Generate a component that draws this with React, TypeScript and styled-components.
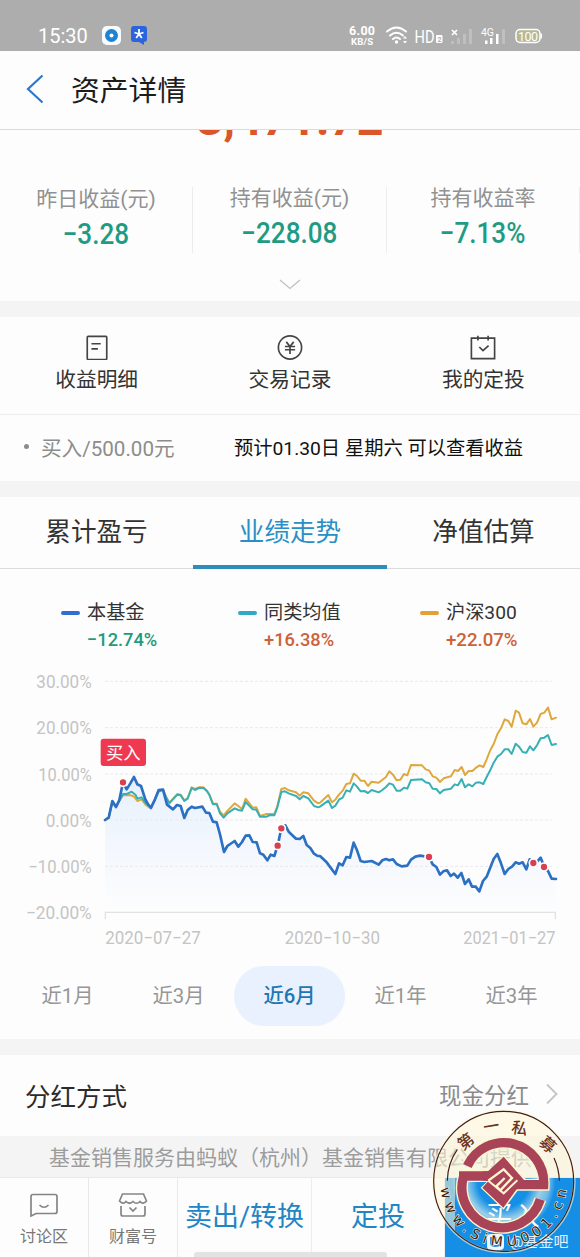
import React from 'react';
// styled
import styled, { createGlobalStyle } from 'styled-components';

const sans = `Roboto, 'Noto Sans CJK SC', sans-serif`;

const GlobalStyle = createGlobalStyle`
    * { box-sizing: border-box; }
    body {
        margin: 0;
        background: #fdfdfd;
        font-family: ${sans};
        color: #333;
    }
    svg { display: block; }
`;

const Page = styled.div`
    position: relative;
    width: 580px;
    height: 1257px;
    overflow: hidden;
    display: flex;
    flex-direction: column;
    background: #fdfdfd;
`;

// Horizontally squeezed text, close to the narrow numerals of the app
const Narrow = styled.span<{ $x?: number; $origin?: string }>`
    display: inline-block;
    white-space: nowrap;
    transform: scaleX(${p => p.$x || 0.9});
    transform-origin: ${p => p.$origin || 'center'};
`;

const StatusBar = styled.div`
    flex: none;
    height: 51px;
    padding: 20px 36px 0 38px;
    display: flex;
    align-items: center;
    background: #adadad;
    color: #fff;
`;

const Clock = styled.div`
    width: 64px;
    font-size: 20px;
    line-height: 30px;
`;

const StatusRight = styled.div`
    flex: 1;
    display: flex;
    justify-content: flex-end;
`;

const NavBar = styled.div`
    flex: none;
    height: 79px;
    padding: 0 26px 3px;
    display: flex;
    align-items: center;
    gap: 27px;
    border-bottom: 1px solid #dcdcdc;
    color: #1c1c1c;
    font-size: 28.8px;
`;

const Summary = styled.div`
    flex: none;
    height: 171px;
    overflow: hidden;
    display: flex;
    flex-direction: column;
    align-items: center;
`;

const Total = styled.div`
    flex: none;
    height: 48px;
    margin-top: -35px;
    line-height: 48px;
    font-size: 47px;
    font-weight: 700;
    color: #d9572b;
`;

const Stats = styled.div`
    width: 580px;
    margin-top: 44px;
    display: grid;
    grid-template-columns: 193px 194px 193px;
    text-align: center;
`;

const Stat = styled.div<{ $drop?: number }>`
    height: 66px;
    border-right: 1px solid #ececec;
    padding-top: ${p => p.$drop || 0}px;
`;

const StatLabel = styled.div`
    height: 22px;
    line-height: 22px;
    font-size: 21px;
    color: #919191;
`;

const StatValue = styled.div`
    margin-top: 7px;
    line-height: 34px;
    font-size: 29px;
    font-weight: 500;
    color: #1f9b83;
`;

const ChevronDown = styled.svg`
    margin-top: 26px;
`;

const Band = styled.div<{ $h: number }>`
    flex: none;
    height: ${p => p.$h}px;
    background: #f4f4f4;
`;

const Shortcuts = styled.div`
    flex: none;
    height: 98px;
    padding-top: 17px;
    display: grid;
    grid-template-columns: repeat(3, 1fr);
    border-bottom: 1px solid #ededed;
`;

const Shortcut = styled.div`
    display: flex;
    flex-direction: column;
    align-items: center;
    gap: 8px;
    font-size: 20.7px;
    line-height: 24px;
`;

const Pending = styled.div`
    flex: none;
    height: 66px;
    padding: 0 24px 3px;
    display: flex;
    align-items: center;
    font-size: 20.6px;
    color: #8c8c8c;
`;

const Bullet = styled.span`
    width: 5px;
    height: 5px;
    margin-right: 12px;
    border-radius: 50%;
    background: #8c8c8c;
`;

const PendingAmount = styled.span`
    width: 193px;
`;

const PendingNote = styled.span`
    font-size: 19.25px;
    color: #111;
`;

const Tabs = styled.div`
    flex: none;
    height: 72px;
    display: grid;
    grid-template-columns: 193px 194px 193px;
    border-bottom: 1px solid #dcdcdc;
`;

const Tab = styled.div<{ $active?: boolean }>`
    height: 72px;
    padding-top: 3px;
    line-height: 64px;
    text-align: center;
    font-size: 25.6px;
    color: ${p => p.$active ? '#2a8fc4' : '#333'};
    border-bottom: ${p => p.$active ? '4px solid #2f8dba' : 'none'};
`;

const Legend = styled.div`
    flex: none;
    height: 101px;
    padding: 31px 0 0 61px;
    display: grid;
    grid-template-columns: 177px 182px 160px;
`;

const LegendItem = styled.div`
    display: grid;
    grid-template-columns: 19px 1fr;
    grid-template-rows: 26px 26px;
    column-gap: 7px;
    align-items: center;
`;

const Dash = styled.span<{ $color: string }>`
    height: 4px;
    border-radius: 2px;
    background: ${p => p.$color};
`;

const LegendName = styled.span`
    font-size: 19.2px;
    line-height: 26px;
    white-space: nowrap;
`;

const LegendValue = styled.span<{ $up?: boolean }>`
    grid-column: 2;
    font-size: 19px;
    line-height: 25px;
    font-weight: 500;
    color: ${p => p.$up ? '#cc6238' : '#1f9b7c'};
`;

const ChartBox = styled.div`
    flex: none;
    height: 296px;
`;

const Ranges = styled.div`
    flex: none;
    height: 73px;
    padding: 0 12px;
    display: grid;
    grid-template-columns: repeat(5, 111px);
`;

const Range = styled.div<{ $active?: boolean }>`
    height: 60px;
    line-height: 61px;
    border-radius: 30px;
    text-align: center;
    font-size: 20.3px;
    font-weight: ${p => p.$active ? 500 : 400};
    color: ${p => p.$active ? '#2176b4' : '#969696'};
    background: ${p => p.$active ? '#e8f1fd' : 'none'};
`;

const DividendRow = styled.div`
    flex: none;
    height: 81px;
    padding: 0 22px 3px 25px;
    display: flex;
    align-items: center;
    font-size: 25.5px;
    color: #2b2b2b;
`;

const DividendValue = styled.span`
    margin-left: auto;
    margin-right: 17px;
    font-size: 22.5px;
    color: #8a8a8a;
`;

const Notice = styled.div`
    flex: none;
    height: 41px;
    padding-left: 49px;
    line-height: 44px;
    font-size: 21px;
    white-space: nowrap;
    background: #f4f4f4;
    color: #9c9c9c;
`;

const ActionBar = styled.div`
    flex: none;
    height: 80px;
    display: grid;
    grid-template-columns: 89px 89px 134px 133px 135px;
    border-top: 1px solid #e9e9e9;
`;

const SmallAction = styled.div`
    padding-top: 15px;
    display: flex;
    flex-direction: column;
    align-items: center;
    gap: 10px;
    border-right: 1px solid #e9e9e9;
    font-size: 16px;
    line-height: 20px;
    color: #777;
`;

const Action = styled.div<{ $primary?: boolean }>`
    line-height: 79px;
    text-align: center;
    white-space: nowrap;
    font-size: 27px;
    border-right: ${p => p.$primary ? 'none' : '1px solid #ededed'};
    color: ${p => p.$primary ? '#fff' : '#2285c4'};
    background: ${p => p.$primary ? '#158fe6' : 'none'};
`;

const HomeIndicator = styled.div`
    position: absolute;
    left: 194px;
    bottom: 0;
    width: 193px;
    height: 5px;
    border-radius: 3px 3px 0 0;
    background: #e3e3e3;
`;

const Credit = styled.div`
    position: absolute;
    left: 487px;
    top: 1231px;
    display: flex;
    align-items: center;
    gap: 6px;
    font-size: 15px;
    line-height: 22px;
    color: #e4f2fd;
`;

const Seal = styled.svg`
    position: absolute;
    left: 430px;
    top: 1108px;
`;

// Chart points, three units to a pixel. The second half starts at x = 690.
type Point = [number, number];
const join = (first: Point[], second: Point[]): string =>
    [...first, ...second.map(([x, y]) => [x + 690, y])].map(p => p.join(',')).join(' ');

const fund = join([
    [45, 450], [56, 443], [67, 393], [78, 411], [88, 390], [99, 337], [110, 358], [121, 340], [132, 321], [142, 343],
    [153, 348], [166, 388], [175, 404], [183, 413], [195, 388], [206, 360], [219, 359], [231, 404], [249, 418], [261, 405],
    [272, 408], [283, 444], [293, 420], [305, 410], [315, 414], [337, 410], [348, 428], [358, 429], [369, 455], [380, 457],
    [390, 493], [402, 546], [412, 528], [434, 513], [445, 530], [456, 516], [467, 497], [478, 496], [488, 516], [500, 517],
    [510, 550], [520, 554], [532, 571], [542, 554], [553, 558], [563, 527], [574, 475], [586, 466], [596, 485], [618, 506],
    [629, 507], [640, 498], [650, 525], [661, 534], [672, 551], [683, 558],
], [
    [0, 558], [20, 577], [46, 612], [57, 580], [68, 586], [79, 561], [90, 563], [101, 518], [111, 541], [122, 573],
    [133, 576], [155, 573], [176, 584], [187, 571], [198, 567], [208, 571], [219, 568], [230, 582], [245, 589], [262, 587],
    [273, 569], [286, 560], [300, 557], [327, 561], [338, 583], [349, 591], [360, 614], [370, 604], [381, 601], [392, 618],
    [402, 611], [413, 623], [424, 609], [435, 642], [446, 628], [456, 650], [467, 650], [478, 664], [489, 633], [500, 620],
    [521, 567], [532, 552], [543, 580], [554, 612], [565, 597], [576, 590], [587, 577], [597, 581], [608, 577], [619, 598],
    [629, 568], [640, 579], [652, 574], [662, 563], [673, 591], [684, 603], [695, 626], [708, 627],
]);

const average = join([
    [45, 450], [56, 443], [67, 396], [78, 411], [88, 392], [99, 372], [110, 372], [125, 365], [137, 375], [142, 386],
    [155, 382], [166, 398], [183, 413], [206, 365], [219, 359], [228, 382], [238, 400], [249, 388], [262, 374], [272, 376],
    [283, 393], [293, 386], [305, 354], [315, 360], [326, 354], [340, 354], [351, 364], [358, 375], [369, 403], [380, 402],
    [390, 430], [401, 443], [412, 430], [434, 415], [445, 420], [456, 422], [467, 396], [488, 418], [499, 419], [510, 440],
    [530, 440], [540, 435], [553, 436], [562, 412], [574, 366], [585, 364], [596, 370], [618, 378], [629, 388], [640, 378],
    [655, 385], [672, 408], [685, 412],
], [
    [0, 410], [25, 392], [36, 414], [46, 407], [57, 389], [68, 383], [79, 361], [90, 365], [101, 340], [111, 350],
    [122, 364], [133, 363], [144, 369], [155, 360], [176, 367], [187, 360], [198, 351], [208, 340], [219, 344], [230, 362],
    [241, 362], [252, 353], [262, 356], [273, 330], [306, 328], [317, 337], [328, 340], [338, 356], [349, 357], [360, 370],
    [371, 360], [393, 356], [404, 343], [414, 346], [425, 327], [435, 352], [446, 343], [457, 349], [468, 338], [479, 337],
    [490, 342], [500, 321], [511, 300], [521, 278], [532, 260], [543, 252], [554, 238], [565, 238], [575, 252], [587, 221],
    [597, 230], [608, 246], [619, 248], [630, 229], [640, 241], [651, 226], [662, 205], [673, 203], [684, 195], [695, 225],
    [708, 222],
]);

const csi300 = join([
    [45, 450], [56, 443], [67, 396], [78, 411], [88, 392], [99, 376], [120, 375], [132, 380], [142, 393], [155, 388],
    [166, 403], [183, 416], [206, 362], [219, 359], [228, 380], [238, 398], [262, 372], [272, 374], [283, 391], [293, 384],
    [305, 352], [315, 357], [326, 352], [340, 352], [351, 362], [358, 373], [369, 401], [380, 401], [390, 425], [401, 436],
    [412, 423], [434, 400], [445, 408], [456, 418], [467, 386], [488, 413], [499, 412], [510, 438], [530, 432], [553, 432],
    [562, 408], [574, 357], [585, 354], [596, 361], [618, 367], [629, 377], [640, 367], [655, 370], [672, 392], [685, 400],
], [
    [0, 398], [25, 375], [36, 397], [46, 389], [57, 374], [68, 362], [79, 342], [90, 340], [101, 311], [111, 318],
    [122, 332], [133, 332], [144, 348], [155, 335], [176, 338], [198, 321], [208, 304], [219, 314], [230, 331], [241, 329],
    [252, 312], [262, 316], [273, 285], [306, 286], [317, 298], [328, 302], [338, 319], [349, 323], [360, 336], [371, 325],
    [393, 319], [404, 300], [414, 303], [425, 291], [435, 315], [446, 303], [457, 303], [468, 293], [479, 286], [490, 291],
    [500, 268], [511, 240], [521, 222], [532, 193], [543, 175], [554, 148], [565, 153], [575, 170], [587, 122], [597, 128],
    [608, 160], [619, 163], [630, 147], [640, 170], [651, 158], [662, 132], [673, 128], [684, 113], [695, 148], [708, 143],
]);

const trades: Point[] = [[99, 337], [563, 527], [574, 475], [1017, 561], [1330, 579], [1362, 591]];

const yTicks = [
    { label: '30.00%', y: 34, w: 166 },
    { label: '20.00%', y: 173, w: 166 },
    { label: '10.00%', y: 312, w: 160 },
    { label: '0.00%', y: 450, w: 138 },
    { label: '−10.00%', y: 589, w: 190 },
    { label: '−20.00%', y: 728, w: 197 },
];

const xTicks = [
    { label: '2020−07−27', x: 46, w: 286 },
    { label: '2020−10−30', x: 584, w: 286 },
    { label: '2021−01−27', x: 1120, w: 276 },
];

const Chart: React.FC = () => (
    <svg width="580" height="296" viewBox="-270 0 1740 888" fontFamily={sans}>
        <defs>
            <linearGradient id="fill" x1="0" y1="0" x2="0" y2="1">
                <stop offset="0" stopColor="#e6f1fd" />
                <stop offset="0.5" stopColor="#f3f7fd" />
                <stop offset="1" stopColor="#fdfdfd" />
            </linearGradient>
        </defs>
        <polygon points={`${fund} 1398,726 45,726`} fill="url(#fill)" />
        {yTicks.slice(0, 5).map(t => (
            <line key={t.label} x1="45" x2="1386" y1={t.y} y2={t.y} stroke="#e9e9ed" strokeWidth="3" strokeDasharray="9 6" />
        ))}
        <path d="M46 748V727H1396V748" fill="none" stroke="#e2e2e2" strokeWidth="4" />
        {yTicks.map(t => (
            <text key={t.label} x={5 - t.w} y={t.y + 20} fontSize="54" fill="#c4c4c4" textLength={t.w} lengthAdjust="spacingAndGlyphs">{t.label}</text>
        ))}
        {xTicks.map(t => (
            <text key={t.label} x={t.x} y="822" fontSize="54" fill="#c4c4c4" textLength={t.w} lengthAdjust="spacingAndGlyphs">{t.label}</text>
        ))}
        <g fill="none" strokeLinejoin="round" strokeLinecap="round">
            <polyline points={csi300} stroke="#dfa83f" strokeWidth="6" />
            <polyline points={average} stroke="#36b0b5" strokeWidth="6" />
            <polyline points={fund} stroke="#2c70c4" strokeWidth="8" />
        </g>
        {trades.map(([x, y]) => (
            <circle key={x} cx={x} cy={y} r="12" fill="#d9404f" stroke="#fff" strokeWidth="5" />
        ))}
        <rect x="32" y="206" width="136" height="82" rx="9" fill="#ef3950" />
        <text x="48" y="266" fontSize="52" fill="#fff" textLength="104">买入</text>
    </svg>
);

const StatusIcons: React.FC = () => (
    <svg width="196" height="26" viewBox="0 0 196 26" fill="#fff" fontFamily="Roboto, sans-serif">
        <text x="1" y="11.500" fontSize="12.500" fontWeight="700" textLength="26">6.00</text>
        <text x="3" y="21.500" fontSize="9.500" fontWeight="700" textLength="22">KB/S</text>
        <g fill="none" stroke="#fff" strokeWidth="2" strokeLinecap="round">
            <path d="M39 8.500Q48.500 0.500 58 8.500" />
            <path d="M42 12.500Q48.500 7 55 12.500" />
            <path d="M45 16Q48.500 13 52 16" />
        </g>
        <circle cx="48.500" cy="19" r="1.700" />
        <path d="M55 15.500L57 13L59 15.500ZM55 18L57 20.500L59 18Z" />
        <text x="66.500" y="19.500" fontSize="19" textLength="20" lengthAdjust="spacingAndGlyphs">HD</text>
        <rect x="88" y="12" width="6.500" height="8" rx="1" />
        <text x="89.500" y="18.700" fontSize="7" fill="#adadad" fontWeight="700">2</text>
        <path d="M104 7L109 12M109 7L104 12" stroke="#fff" strokeWidth="1.700" />
        <path d="M103 18h3v3h-3zM109 15h3v6h-3zM115 11h3v10h-3zM121 6h3v15h-3z" opacity="0.22" />
        <text x="133" y="12.500" fontSize="10.500" textLength="13" lengthAdjust="spacingAndGlyphs">4G</text>
        <path d="M137 17.500h2.500v3.500h-2.500zM142 15h2.500v6h-2.500zM148 11h2.500v10h-2.500z" />
        <path d="M154 6h3v15h-3z" opacity="0.22" />
        <rect x="168" y="6.500" width="24" height="13" rx="4" fill="#b5b795" stroke="#fff" strokeWidth="1.500" />
        <path d="M193 10.500q1.500 2.500 0 5z" stroke="#fff" />
        <text x="170" y="17.500" fontSize="12.500" textLength="20">100</text>
    </svg>
);

const SealMark: React.FC = () => (
    <Seal width="150" height="149" viewBox="30 24 450 447">
        <defs>
            <path id="urlArc" d="M62 250A189 189 0 0 0 440 250" />
            <radialGradient id="glow">
                <stop offset="0.500" stopColor="#e8f6ee" stopOpacity="0" />
                <stop offset="0.720" stopColor="#f4f9e8" stopOpacity="0.600" />
                <stop offset="0.880" stopColor="#f4f9e8" stopOpacity="0.400" />
                <stop offset="1" stopColor="#f4f9e8" stopOpacity="0" />
            </radialGradient>
            <clipPath id="upper"><rect x="30" y="24" width="450" height="206" /></clipPath>
            <clipPath id="leftStrip"><rect x="30" y="230" width="75" height="241" /></clipPath>
        </defs>
        <circle cx="251" cy="244" r="211" fill="#fff6d6" opacity="0.550" clipPath="url(#upper)" />
        <circle cx="251" cy="244" r="211" fill="#fff6d6" opacity="0.550" clipPath="url(#leftStrip)" />
        <circle cx="251" cy="246" r="155" fill="url(#glow)" />
        <circle cx="251" cy="244" r="212" fill="none" stroke="#fff8d8" strokeWidth="8" opacity="0.600" />
        <circle cx="251" cy="244" r="210" fill="none" stroke="#401d18" strokeWidth="3.500" />
        <path d="M82 242A169 169 0 0 1 112 148M418 242A169 169 0 0 0 402 174" fill="none" stroke="#401d18" strokeWidth="3.500" />
        <g fill="none" stroke="#fff6cf" strokeWidth="36">
            <path d="M142 198A120 120 0 0 1 371 254H290" />
            <path d="M116 228H210M131 228A120 120 0 0 0 361 298" />
        </g>
        <path d="M251 165L318 238L251 329L182 263L204 242H190V214H206Z" fill="#fff6cf" />
        <g fill="none" stroke="#a94358" strokeWidth="28">
            <path d="M142 198A120 120 0 0 1 371 254H280" />
            <path d="M117 228H205M131 228A120 120 0 0 0 361 298" />
        </g>
        <path d="M251 170L312 240L290 268L250 323L187 263L206 242H190V214H204Z" fill="#a94358" />
        <path d="M205 242L251 208L276 234L241 271L229 259L254 234" fill="none" stroke="#fff6cf" strokeWidth="7" />
        <path d="M205 242L251 280L292 241" fill="none" stroke="#fff6cf" strokeWidth="6" />
        <g fill="#6b3320" fontFamily="'Noto Sans CJK SC', sans-serif" fontSize="48" fontWeight="500" textAnchor="middle">
            <text transform="translate(137 124) rotate(-38)" y="18">第</text>
            <text transform="translate(214 78) rotate(-9)" y="18">一</text>
            <text transform="translate(299 84) rotate(10)" y="18">私</text>
            <text transform="translate(384 133) rotate(42)" y="18">募</text>
        </g>
        <text fill="#401d18" fontFamily="'DejaVu Sans', sans-serif" fontSize="42" stroke="#fff6cf" strokeWidth="3" paintOrder="stroke">
            <textPath href="#urlArc" startOffset="14" textLength="560">www.SiMU001.cn</textPath>
        </text>
    </Seal>
);

const stats = [
    { label: '昨日收益(元)', value: '−3.28', drop: 1 },
    { label: '持有收益(元)', value: '−228.08', drop: 0 },
    { label: '持有收益率', value: '−7.13%', drop: 0 },
];

const App: React.FC = () => {
    return <>
        <GlobalStyle />
        <Page>
            <StatusBar>
                <Clock>15:30</Clock>
                <svg width="50" height="22" viewBox="0 0 50 22">
                    <rect x="0" y="1" width="19" height="19" rx="5" fill="#f8fbfd" />
                    <circle cx="9.500" cy="10.500" r="6.500" fill="#1d84d1" />
                    <circle cx="9.500" cy="10.500" r="2" fill="#fff" />
                    <path d="M32 1h10q3 0 3 3v10q0 3-3 3v3l-5-3h-5q-3 0-3-3v-10q0-3 3-3z" fill="#2b64dd" />
                    <path d="M37 4v5M37 9l4.500-1.500M37 9l-4.500-1.500M37 9l-2.800 4M37 9l2.800 4" stroke="#fff" strokeWidth="1.800" />
                </svg>
                <StatusRight><StatusIcons /></StatusRight>
            </StatusBar>
            <NavBar>
                <svg width="18" height="30" viewBox="0 0 18 30" fill="none" stroke="#2a78cc" strokeWidth="2.200">
                    <path d="M16.500 1.500L2 15L16.500 28.500" />
                </svg>
                <span>资产详情</span>
            </NavBar>
            <Summary>
                <Total>3,471.72</Total>
                <Stats>
                    {stats.map(s => (
                        <Stat key={s.label} $drop={s.drop}>
                            <StatLabel>{s.label}</StatLabel>
                            <StatValue><Narrow>{s.value}</Narrow></StatValue>
                        </Stat>
                    ))}
                </Stats>
                <ChevronDown width="22" height="12" viewBox="0 0 22 12" fill="none" stroke="#c0c0c0" strokeWidth="1.300">
                    <path d="M1 1L11 9.500L21 1" />
                </ChevronDown>
            </Summary>
            <Band $h={16} />
            <Shortcuts>
                <Shortcut>
                    <svg width="26" height="26" viewBox="1 1 28 28" fill="none" stroke="#444" strokeWidth="1.800">
                        <rect x="4.500" y="3.500" width="21" height="25" rx="1" />
                        <path d="M9 11.500h10M9 17h7" />
                    </svg>
                    <span>收益明细</span>
                </Shortcut>
                <Shortcut>
                    <svg width="26" height="26" viewBox="0 0 28 28" fill="none" stroke="#444" strokeWidth="1.800">
                        <circle cx="14" cy="14.500" r="12.500" />
                        <path d="M10 8.500l4 5l4-5M8.500 13.500h11M8.500 17h11M14 13.500v8" />
                    </svg>
                    <span>交易记录</span>
                </Shortcut>
                <Shortcut>
                    <svg width="26" height="26" viewBox="0 0 28 28" fill="none" stroke="#444" strokeWidth="1.800">
                        <path d="M1.500 4.500h25v22h-25zM8.500 2v5M19.500 2v5M10 14l4 4l6-5.500" />
                    </svg>
                    <span>我的定投</span>
                </Shortcut>
            </Shortcuts>
            <Pending>
                <Bullet />
                <PendingAmount>买入/500.00元</PendingAmount>
                <PendingNote>预计01.30日 星期六 可以查看收益</PendingNote>
            </Pending>
            <Band $h={16} />
            <Tabs>
                <Tab>累计盈亏</Tab>
                <Tab $active>业绩走势</Tab>
                <Tab>净值估算</Tab>
            </Tabs>
            <Legend>
                <LegendItem>
                    <Dash $color="#316dd2" />
                    <LegendName>本基金</LegendName>
                    <LegendValue><Narrow $x={0.96} $origin="left">−12.74%</Narrow></LegendValue>
                </LegendItem>
                <LegendItem>
                    <Dash $color="#2eaac6" />
                    <LegendName>同类均值</LegendName>
                    <LegendValue $up><Narrow $x={0.96} $origin="left">+16.38%</Narrow></LegendValue>
                </LegendItem>
                <LegendItem>
                    <Dash $color="#e2a036" />
                    <LegendName>沪深300</LegendName>
                    <LegendValue $up><Narrow $x={0.98} $origin="left">+22.07%</Narrow></LegendValue>
                </LegendItem>
            </Legend>
            <ChartBox><Chart /></ChartBox>
            <Ranges>
                <Range>近1月</Range>
                <Range>近3月</Range>
                <Range $active>近6月</Range>
                <Range>近1年</Range>
                <Range>近3年</Range>
            </Ranges>
            <Band $h={16} />
            <DividendRow>
                <span>分红方式</span>
                <DividendValue>现金分红</DividendValue>
                <svg width="12" height="22" viewBox="0 0 12 22" fill="none" stroke="#c4c4c4" strokeWidth="1.800">
                    <path d="M1 1.500L10.500 11L1 20.500" />
                </svg>
            </DividendRow>
            <Notice>基金销售服务由蚂蚁（杭州）基金销售有限公司提供</Notice>
            <ActionBar>
                <SmallAction>
                    <svg width="28" height="24" viewBox="0 0 28 24" fill="none" stroke="#858585" strokeWidth="1.700">
                        <path d="M3 1.500h22q2 0 2 2v15q0 2-2 2h-19l-5 2.500v-19.500q0-2 2-2z" />
                        <path d="M9.500 12q4.500 4.500 9 0" />
                    </svg>
                    <span>讨论区</span>
                </SmallAction>
                <SmallAction>
                    <svg width="30" height="24" viewBox="0 0 30 24" fill="none" stroke="#858585" strokeWidth="1.700">
                        <path d="M4.500 1h21l3 7q-3.500 4-6.500 0.500q-3.500 3.500-7 0q-3.500 3.500-7 0q-3 3.500-6.500-0.500z" />
                        <path d="M3 13v8q0 2 2 2h20q2 0 2-2v-8M11.500 14.500l3.500 3.500l3.500-3.500" />
                    </svg>
                    <span>财富号</span>
                </SmallAction>
                <Action>卖出/转换</Action>
                <Action>定投</Action>
                <Action $primary>买入</Action>
            </ActionBar>
            <HomeIndicator />
            <Credit>
                <svg width="17" height="16" viewBox="0 0 17 16">
                    <rect width="17" height="16" rx="4" fill="#eef7fe" />
                    <path d="M4 3v6q0 3 4.500 3t4.500-3v-6M8.500 3v6" fill="none" stroke="#2b8bdc" strokeWidth="1.800" />
                </svg>
                <span>@基金吧</span>
            </Credit>
            <SealMark />
        </Page>
    </>
}

export default App;
